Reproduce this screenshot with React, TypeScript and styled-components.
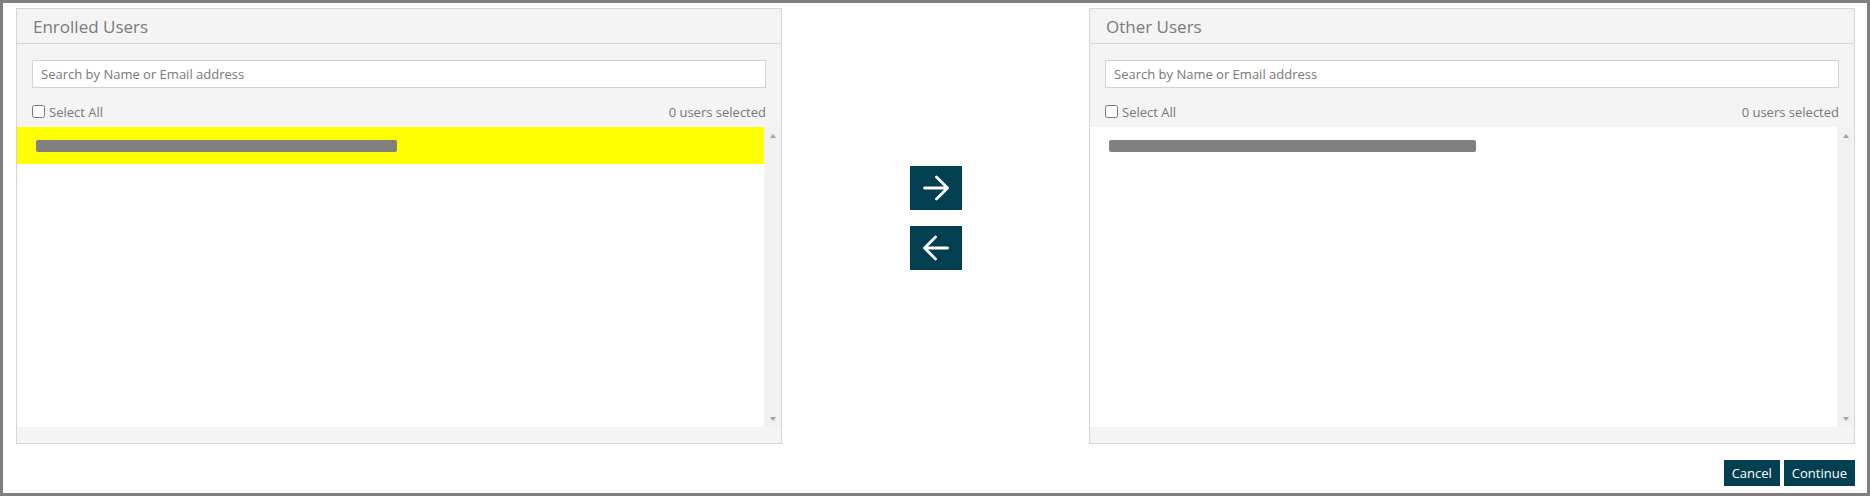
import React from "react";
import styled, { createGlobalStyle } from "styled-components";

const Global = createGlobalStyle`
  html, body { margin: 0; padding: 0; background: #ffffff; }
  body { font-family: "Open Sans", "Noto Sans", "Liberation Sans", sans-serif; }
  * { box-sizing: border-box; }
`;

const Frame = styled.div`
  width: 1870px;
  height: 496px;
  border: 3px solid #808080;
  padding: 5px 12px 0 13px;
  background: #fff;
  display: flex;
  flex-direction: column;
`;

const Columns = styled.div`
  display: flex;
  align-items: flex-start;
`;

const Panel = styled.section`
  width: 766px;
  flex: none;
  border: 1px solid #d6d6d6;
  background: #f4f4f4;
  display: flex;
  flex-direction: column;
`;

const PanelHeader = styled.div`
  height: 35px;
  border-bottom: 1px solid #d6d6d6;
  padding-left: 16px;
  display: flex;
  align-items: center;
  font-size: 17px;
  color: #7a7a7a;
`;

const PanelBody = styled.div`
  padding-top: 16px;
  padding-bottom: 16px;
  display: flex;
  flex-direction: column;
`;

const SearchInput = styled.input`
  margin: 0 15px;
  height: 28px;
  border: 1px solid #d2d2d2;
  background: #fff;
  padding: 0 8px;
  font-family: "Open Sans", "Noto Sans", sans-serif;
  font-size: 13px;
  color: #555;
  outline: none;
  &::placeholder { color: #777; }
`;

const SelectRow = styled.div`
  height: 39px;
  padding: 8px 15px 0 15px;
  display: flex;
  align-items: center;
  justify-content: space-between;
  font-size: 13px;
  color: #777;
`;

const CheckLabel = styled.label`
  display: flex;
  align-items: center;
  gap: 4px;
  input {
    margin: 0;
    width: 13px;
    height: 13px;
  }
`;

const List = styled.div`
  height: 300px;
  display: grid;
  grid-template-columns: 1fr 17px;
  background: #fff;
`;

const Rows = styled.div`
  display: flex;
  flex-direction: column;
`;

const Row = styled.div<{ $selected?: boolean }>`
  height: 37px;
  padding: 13px 0 0 19px;
  background: ${(p) => (p.$selected ? "#ffff00" : "#ffffff")};
`;

const Redacted = styled.div`
  height: 12px;
  border-radius: 2px;
  background: #808080;
`;

const Scrollbar = styled.div`
  background: #f1f1f1;
  display: flex;
  flex-direction: column;
  justify-content: space-between;
`;

const ScrollArrow = styled.div<{ $down?: boolean }>`
  height: 17px;
  display: flex;
  align-items: center;
  justify-content: center;
  &::before {
    content: "";
    width: 0;
    height: 0;
    border-left: 3.5px solid transparent;
    border-right: 3.5px solid transparent;
    ${(p) =>
      p.$down
        ? "border-top: 4px solid #a3a3a3;"
        : "border-bottom: 4px solid #a3a3a3;"}
  }
`;

const Middle = styled.div`
  flex: 1;
  display: flex;
  flex-direction: column;
  align-items: center;
  gap: 16px;
  padding-top: 158px;
`;

const MoveButton = styled.button`
  width: 52px;
  height: 44px;
  border: none;
  padding: 0;
  background: #023f51;
  display: flex;
  align-items: center;
  justify-content: center;
  cursor: pointer;
`;

const Footer = styled.div`
  display: flex;
  justify-content: flex-end;
  gap: 4px;
  margin-top: 16px;
`;

const ActionButton = styled.button`
  height: 26px;
  border: none;
  padding: 0 8px;
  background: #023f51;
  color: #fff;
  font-family: "Open Sans", "Noto Sans", sans-serif;
  font-size: 13px;
  cursor: pointer;
`;

const Arrow = ({ left }: { left?: boolean }) => (
  <svg
    width="26"
    height="26"
    viewBox="0 0 26 26"
    fill="none"
    stroke="#ffffff"
    strokeWidth="2.8"
    strokeLinecap="round"
    strokeLinejoin="round"
    style={left ? { transform: "scaleX(-1)" } : undefined}
  >
    <path d="M1.5 13H24.5M13.5 2L24.5 13L13.5 24" />
  </svg>
);

type PanelProps = { title: string; selected?: boolean; barWidth: number };

const UserPanel = ({ title, selected, barWidth }: PanelProps) => (
  <Panel>
    <PanelHeader>{title}</PanelHeader>
    <PanelBody>
      <SearchInput placeholder="Search by Name or Email address" />
      <SelectRow>
        <CheckLabel>
          <input type="checkbox" />
          Select All
        </CheckLabel>
        <span>0 users selected</span>
      </SelectRow>
      <List>
        <Rows>
          <Row $selected={selected}>
            <Redacted style={{ width: barWidth }} />
          </Row>
        </Rows>
        <Scrollbar>
          <ScrollArrow />
          <ScrollArrow $down />
        </Scrollbar>
      </List>
    </PanelBody>
  </Panel>
);

export default function App() {
  return (
    <>
      <Global />
      <Frame>
        <Columns>
          <UserPanel title="Enrolled Users" selected barWidth={361} />
          <Middle>
            <MoveButton aria-label="Move right">
              <Arrow />
            </MoveButton>
            <MoveButton aria-label="Move left">
              <Arrow left />
            </MoveButton>
          </Middle>
          <UserPanel title="Other Users" barWidth={367} />
        </Columns>
        <Footer>
          <ActionButton>Cancel</ActionButton>
          <ActionButton>Continue</ActionButton>
        </Footer>
      </Frame>
    </>
  );
}
